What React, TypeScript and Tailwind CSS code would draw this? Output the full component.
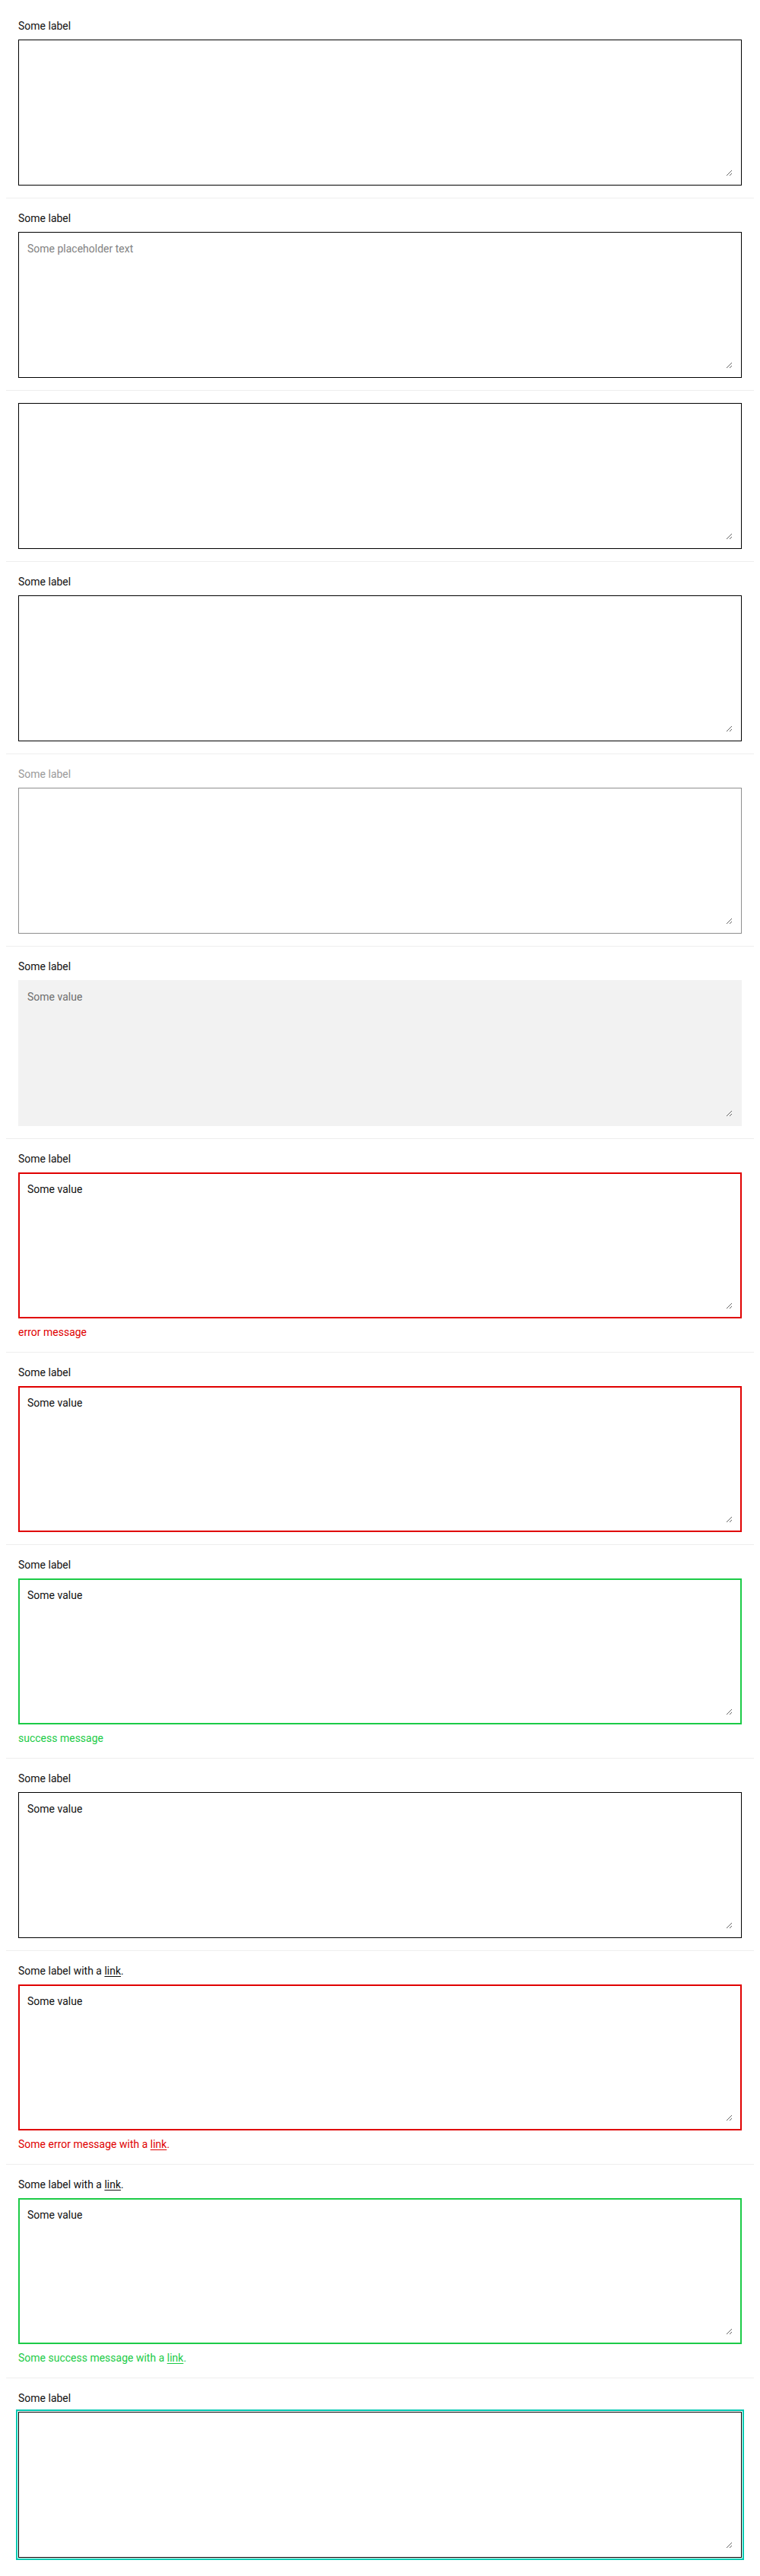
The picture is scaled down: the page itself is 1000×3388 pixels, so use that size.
import React from 'react';

type Status = 'default' | 'error' | 'success';

interface FieldProps {
  label?: React.ReactNode;
  value?: string;
  placeholder?: string;
  status?: Status;
  message?: React.ReactNode;
  disabled?: boolean;
  readOnly?: boolean;
  focused?: boolean;
  last?: boolean;
}

function Link({ children }: { children: React.ReactNode }) {
  return <a href="#" className="underline underline-offset-2">{children}</a>;
}

function TextareaField({ label, value, placeholder, status = 'default', message, disabled, readOnly, focused, last }: FieldProps) {
  // the frame carries border + padding; the native resizer sits inside it
  const frame = [
    'h-[192px] w-full',
    status === 'error'
      ? 'border-2 border-[#e00000] p-[10px]'
      : status === 'success'
        ? 'border-2 border-[#1ccb47] p-[10px]'
        : disabled
          ? 'border border-[#8e8e8e] p-[11px] bg-white'
          : readOnly
            ? 'border border-[#f2f2f2] bg-[#f2f2f2] p-[11px]'
            : 'border border-black p-[11px]',
    focused ? 'outline-2 outline-solid outline-offset-1 outline-[#00c9b1]' : '',
  ].join(' ');

  return (
    <div className={`p-4 ${last ? '' : 'border-b border-[#eeeeee]'}`}>
      {label && (
        <label className={`block text-[14px] leading-5 mb-2 ${disabled ? 'text-[#9a9a9a]' : 'text-[#111]'}`}>
          {label}
        </label>
      )}
      <div className={frame}>
        <textarea
          className={`block h-full w-full bg-transparent text-[14px] leading-5 outline-none resize-none placeholder:text-[#828282] ${readOnly ? 'text-[#6e6e6e]' : 'text-[#111]'}`}
          style={{ resize: 'vertical' }}
          defaultValue={value}
          placeholder={placeholder}
          disabled={disabled}
          readOnly={readOnly}
        />
      </div>
      {message && (
        <div className={`mt-2 text-[14px] leading-5 ${status === 'error' ? 'text-[#e00000]' : 'text-[#1ccb47]'}`}>
          {message}
        </div>
      )}
    </div>
  );
}

export default function App() {
  return (
    <div className="bg-white p-2" style={{ fontFamily: 'Roboto, "Liberation Sans", sans-serif' }}>
      <TextareaField label="Some label" />
      <TextareaField label="Some label" placeholder="Some placeholder text" />
      <TextareaField />
      <TextareaField label="Some label" />
      <TextareaField label="Some label" disabled />
      <TextareaField label="Some label" value="Some value" readOnly />
      <TextareaField label="Some label" value="Some value" status="error" message="error message" />
      <TextareaField label="Some label" value="Some value" status="error" />
      <TextareaField label="Some label" value="Some value" status="success" message="success message" />
      <TextareaField label="Some label" value="Some value" />
      <TextareaField
        label={<>Some label with a <Link>link</Link>.</>}
        value="Some value"
        status="error"
        message={<>Some error message with a <Link>link</Link>.</>}
      />
      <TextareaField
        label={<>Some label with a <Link>link</Link>.</>}
        value="Some value"
        status="success"
        message={<>Some success message with a <Link>link</Link>.</>}
      />
      <TextareaField label="Some label" focused last />
    </div>
  );
}
